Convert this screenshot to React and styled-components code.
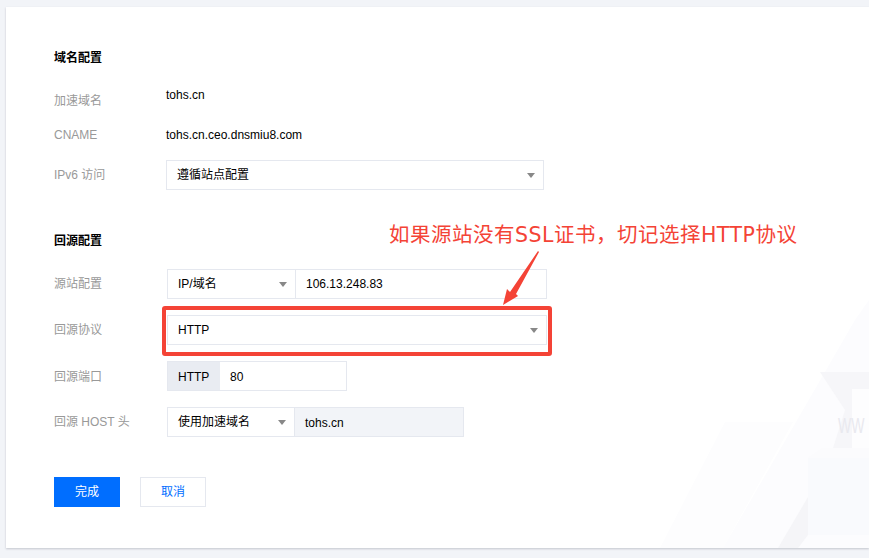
import React from "react";
import styled, { createGlobalStyle } from "styled-components";

const Global = createGlobalStyle`
  html, body { margin: 0; padding: 0; height: 558px; overflow: hidden; background: #f2f4f8; }
  * { box-sizing: border-box; }
`;

const Page = styled.div`
  width: 869px;
  height: 558px;
  padding: 7px 0 10px 6px;
  font-family: "Liberation Sans", "Noto Sans CJK SC", sans-serif;
  font-size: 12px;
  color: #000;
`;

const Card = styled.main`
  position: relative;
  height: 541px;
  background: #fff;
  padding: 42px 0 0 48px;
  box-shadow: 0 1px 2px rgba(54, 58, 80, 0.25);
  overflow: hidden;
`;

const Decoration = styled.svg`
  position: absolute;
  right: 0;
  bottom: 0;
`;

const Title = styled.h2`
  margin: ${(p) => p.$mt || 0}px 0 0;
  height: 18px;
  line-height: 18px;
  font-size: 12px;
  font-weight: 700;
  color: #000;
`;

const Section = styled.section`
  position: relative;
  display: flex;
  flex-direction: column;
`;

const Row = styled.div`
  display: flex;
  align-items: ${(p) => (p.$top ? "flex-start" : "center")};
  height: ${(p) => p.$h || 30}px;
  margin-top: ${(p) => p.$mt || 0}px;
`;

/* $mb: chinese glyphs sit low in the line box, so most labels get lifted */
const Label = styled.div`
  width: ${(p) => p.$w || 113}px;
  flex: none;
  color: #999;
  margin-bottom: ${(p) => p.$mb ?? 4}px;
  padding-top: ${(p) => p.$pt || 0}px;
`;

const Value = styled.div`
  line-height: 18px;
  margin-top: ${(p) => p.$mt || 0}px;
`;

const Select = styled.div`
  display: flex;
  align-items: center;
  justify-content: space-between;
  width: ${(p) => p.$w}px;
  height: 30px;
  padding: 0 8px 0 10px;
  border: 1px solid #e5e8ef;
  background: #fff;
  flex: none;
`;

const SelectText = styled.span`
  margin-bottom: ${(p) => (p.$cjk ? 4 : 0)}px;
`;

const Caret = styled.i`
  width: 0;
  height: 0;
  border-left: 4.5px solid transparent;
  border-right: 4.5px solid transparent;
  border-top: 5px solid #888;
  margin-top: 1px;
`;

const Input = styled.div`
  display: flex;
  align-items: center;
  width: ${(p) => p.$w}px;
  height: 30px;
  margin-left: -1px;
  padding: ${(p) => (p.$disabled ? "2px" : "0")} 10px 0;
  border: 1px solid #e5e8ef;
  background: ${(p) => (p.$disabled ? "#f2f4f8" : "#fff")};
  flex: none;
`;

const PortGroup = styled.div`
  display: flex;
  width: 180px;
  height: 30px;
  border: 1px solid #e5e8ef;
  flex: none;
`;

const Addon = styled.div`
  width: 52px;
  height: 100%;
  display: flex;
  align-items: center;
  padding: 2px 0 0 10px;
  background: #e9ecf2;
`;

const Port = styled.div`
  display: flex;
  align-items: center;
  padding: 2px 0 0 10px;
`;

const Actions = styled.div`
  display: flex;
  gap: 20px;
  margin-top: 40px;
`;

const Button = styled.button`
  width: 66px;
  height: 30px;
  padding: 0 0 4px;
  border: 1px solid ${(p) => (p.$primary ? "#006eff" : "#e5e8ef")};
  background: ${(p) => (p.$primary ? "#006eff" : "#fff")};
  color: ${(p) => (p.$primary ? "#fff" : "#006eff")};
  font: inherit;
`;

const Note = styled.div`
  position: absolute;
  left: 383px;
  top: 214px;
  font-family: "DejaVu Sans", "Noto Sans CJK SC", sans-serif;
  font-size: 20.5px;
  letter-spacing: 0.5px;
  line-height: 28px;
  color: #f44336;
  white-space: nowrap;
`;

const RedBox = styled.div`
  position: absolute;
  left: 156px;
  top: 299px;
  width: 390px;
  height: 50px;
  border: 4px solid #f44336;
  border-radius: 3px;
  pointer-events: none;
`;

const Arrow = styled.svg`
  position: absolute;
  left: 490px;
  top: 243px;
`;

export default function App() {
  return (
    <Page>
      <Global />
      <Card>
        {/* faint background artwork, coordinates taken from the page */}
        <Decoration width="220" height="248" viewBox="649 300 220 248">
          <polygon points="660,548 725,422 793,422 723,548" fill="#fdfdfe" />
          <polygon points="723,548 855,320 869,300 869,548" fill="#fcfcfe" />
          <polygon points="820,372 869,372 869,448 833,448 845,410" fill="#f6f6f9" />
          <rect x="852" y="389" width="17" height="59" fill="#fdfdfe" />
          <polygon points="823,448 869,448 869,458 808,458" fill="#fbfbfd" />
          <rect x="808" y="458" width="61" height="77" fill="#f9fafd" />
          <polygon points="778,548 808,497 808,535 798,548" fill="#f5f5f8" />
          <text transform="translate(838 433) scale(1 1.6)" fontFamily="Liberation Sans" fontSize="14" fill="#e9e9ef">WW</text>
        </Decoration>

        <Section>
          <Title>域名配置</Title>
          <Row $mt={20} $h={32} $top>
            <Label $w={112} $pt={4}>加速域名</Label>
            <Value $mt={-1}>tohs.cn</Value>
          </Row>
          <Row $h={32}>
            <Label $w={112} $mb={0}>CNAME</Label>
            <Value>tohs.cn.ceo.dnsmiu8.com</Value>
          </Row>
          <Row $mt={9}>
            <Label $w={112}>IPv6 访问</Label>
            <Select $w={378}>
              <SelectText $cjk>遵循站点配置</SelectText>
              <Caret />
            </Select>
          </Row>
        </Section>

        <Section>
          <Title $mt={42}>回源配置</Title>
          <Row $mt={19}>
            <Label>源站配置</Label>
            <Select $w={129}>
              <SelectText $cjk>IP/域名</SelectText>
              <Caret />
            </Select>
            <Input $w={252}>106.13.248.83</Input>
          </Row>
          <Row $mt={16}>
            <Label>回源协议</Label>
            <Select $w={380}>
              <SelectText>HTTP</SelectText>
              <Caret />
            </Select>
          </Row>
          <Row $mt={16}>
            <Label $mb={2}>回源端口</Label>
            <PortGroup>
              <Addon>HTTP</Addon>
              <Port>80</Port>
            </PortGroup>
          </Row>
          <Row $mt={16}>
            <Label>回源 HOST 头</Label>
            <Select $w={128}>
              <SelectText $cjk>使用加速域名</SelectText>
              <Caret />
            </Select>
            <Input $w={170} $disabled>tohs.cn</Input>
          </Row>
        </Section>

        <Actions>
          <Button $primary>完成</Button>
          <Button>取消</Button>
        </Actions>

        <Note>如果源站没有SSL证书，切记选择HTTP协议</Note>
        <RedBox />
        <Arrow width="50" height="56" viewBox="0 0 50 56">
          <polygon points="42,1 43,2 20,44 22,46 7,55 11,39 14,42" fill="#f44336" />
        </Arrow>
      </Card>
    </Page>
  );
}
